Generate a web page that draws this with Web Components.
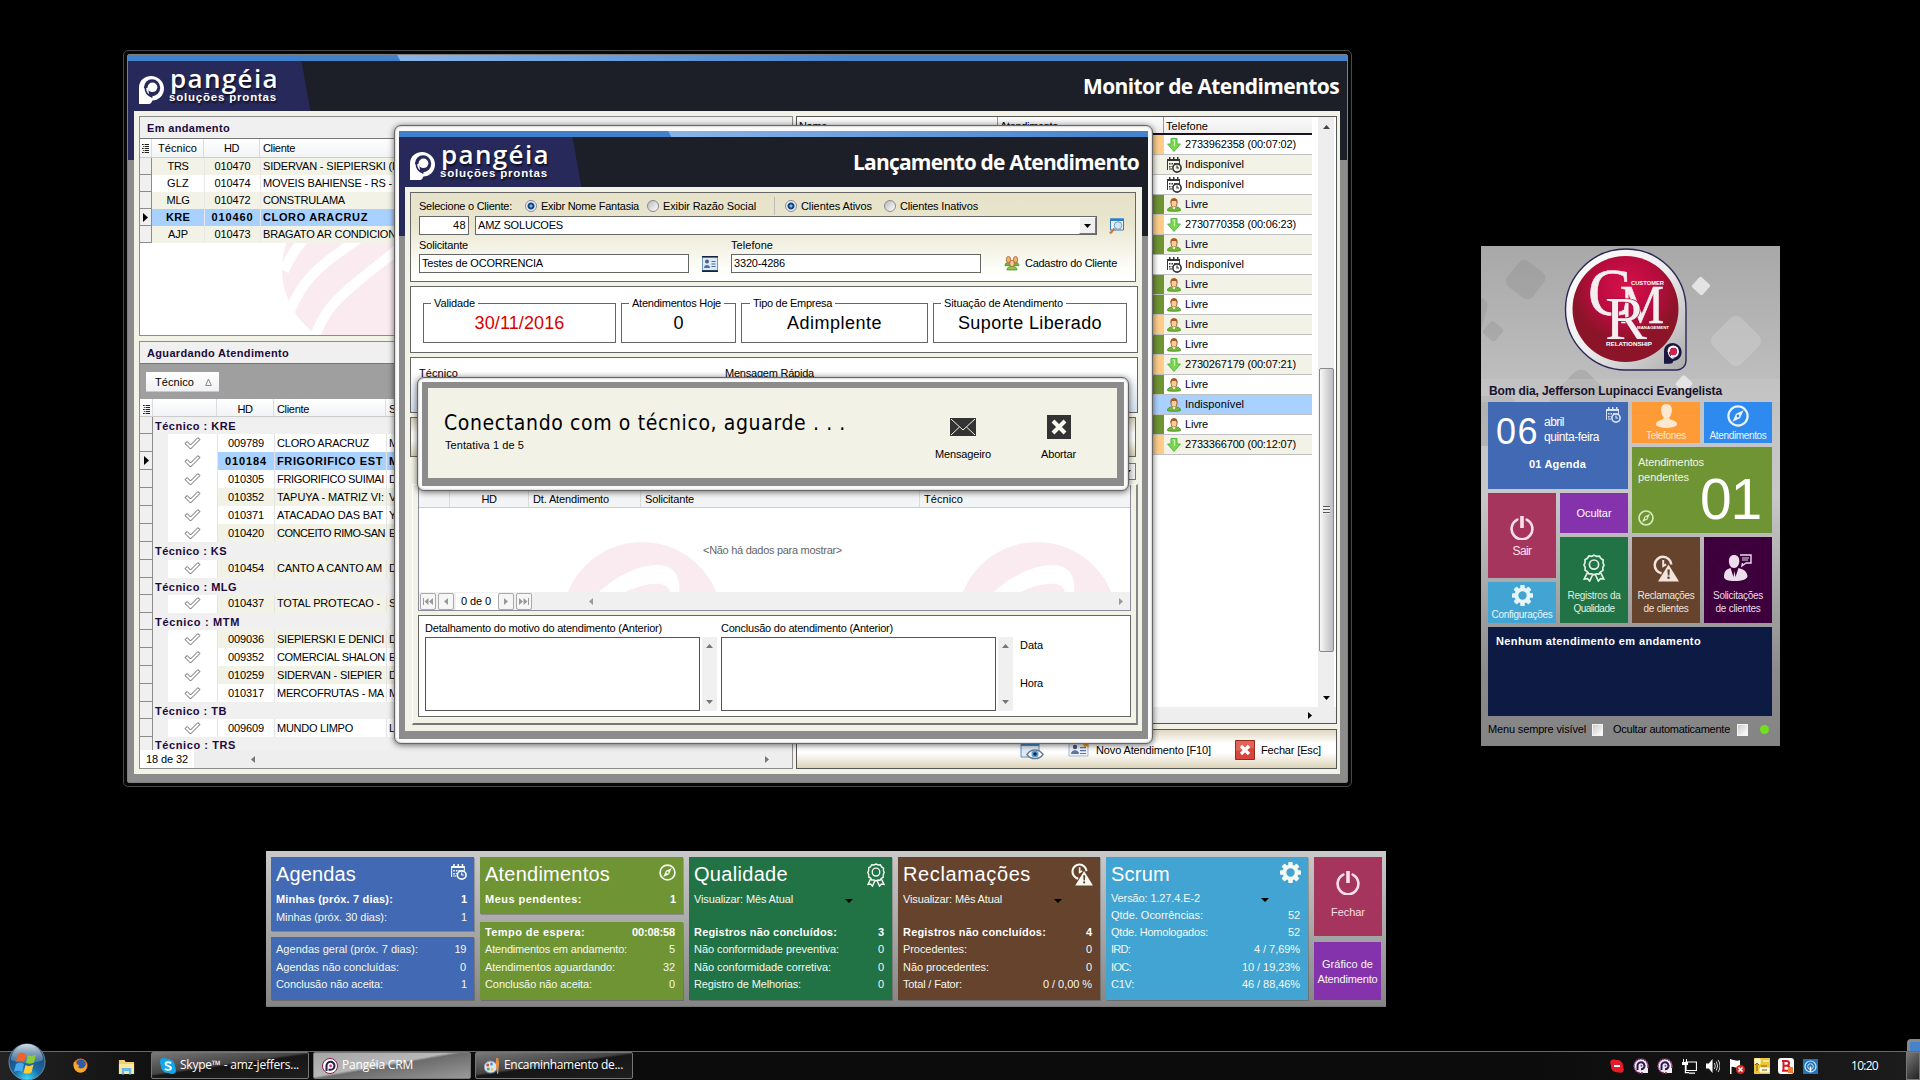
<!DOCTYPE html>
<html lang="pt-BR">
<head>
<meta charset="utf-8">
<title>Pangéia CRM</title>
<style>
html,body{margin:0;padding:0;background:#000}
body{width:1920px;height:1080px;overflow:hidden;position:relative;font:11px/13px "Liberation Sans",Arial,sans-serif;color:#000}
</style>
</head>
<body>
<crm-desktop></crm-desktop>
<script>
const base = `<style>*{box-sizing:border-box}:host{display:block;box-sizing:border-box}
.r{display:flex;align-items:center}.c{display:flex;flex-direction:column}.g{flex:1}
fit-text{flex:none}svg{display:block;flex:none}pg-icon{flex:none}</style>`;
const T = (s, w, st = '') => `<fit-text w="${w}" style="${st}">${s}</fit-text>`;
const I = (n, w, h = w, st = '') => `<pg-icon name="${n}" w="${w}" h="${h}" style="${st}"></pg-icon>`;
const def = (name, html, setup) => customElements.define(name, class extends HTMLElement {
  constructor() {
    super();
    this.attachShadow({ mode: 'open' });
  }
  connectedCallback() {
    this.shadowRoot.innerHTML = base + (typeof html === 'function' ? html(this) : html);
    if (setup) setup(this);
  }
});

/* ---------- icons: [viewBox, markup] ---------- */
const gearTeeth = [0,45,90,135,180,225,270,315].map(a => `<rect x="-2.6" y="-12" width="5.2" height="6" rx="1" transform="rotate(${a})"/>`).join('');
const emblem = (a, b) => `<path fill="${a}" d="M0 28.500V12C0 4 6 0 12 0s12.500 5 12.500 12.500S19 25 13 25c-.6 1.500-1 3.500-3 3.500z"/><ellipse cx="12.800" cy="12" rx="8" ry="8.600" fill="${b}"/><circle cx="13.200" cy="11.500" r="4.800" fill="${a}"/><path fill="${a}" d="M2 13l7-1 1 8 4 4-6 4.500H0V13z"/><path fill="none" stroke="${b}" stroke-width="1.600" d="M6.200 12c0 5 2.500 8 7 9.600"/>`;
const icons = {
  logo: ['0 0 24.500 28.500', emblem('#fff', '#28285a')],
  calClock: ['0 0 16 16', '<g fill="currentColor"><path d="M1 2h13v5h-1V4H2v9H1zM3 0h1.500v3H3zM7 0h1.500v3H7zM11 0h1.500v3H11z"/><path d="M3 6h1.500v1.500H3zM5.500 6H7v1.500H5.500zM8 6h1.500v1H8zM3 9h1.500v1.500H3zM3 11.500h3v1H3zM5.500 9h1v1h-1z"/></g><circle cx="11" cy="11" r="4.100" fill="none" stroke="currentColor" stroke-width="1.600"/><path d="M11 8.600V11h2" fill="none" stroke="currentColor" stroke-width="1.100"/>'],
  compass: ['0 0 22 22', '<circle cx="11" cy="11" r="9.600" fill="none" stroke="currentColor" stroke-width="2.200"/><path fill="currentColor" fill-rule="evenodd" d="M16.500 5.200l-3.500 8-7.500 3.600 3.500-8zM11 9.600a1.400 1.400 0 100 2.800 1.400 1.400 0 000-2.800z"/>'],
  ribbon: ['0 0 22 28', '<g fill="none" stroke="currentColor" stroke-width="1.700"><path d="M11 1.200l2.600 1.100 2.800-.2 1.400 2.400 2.400 1.500-.2 2.800L21 11.200l-1.200 2.500.1 2.700-2.400 1.400-1.500 2.200-2.700-.2-2.300 1-2.400-1-2.800.1-1.400-2.300-2.300-1.300.1-2.800L1 11l1.100-2.500-.1-2.800 2.400-1.400L5.900 2l2.700.3z"/><circle cx="11" cy="10.600" r="4.600"/><path d="M4.600 18.200L1.300 25l3.200-.4L6.700 27l3-6.500M17.400 18.200l3.300 6.800-3.200-.4-2.200 2.400-3-6.500"/></g>'],
  clockWarn: ['0 0 26 27', '<path fill="none" stroke="currentColor" stroke-width="2.500" d="M18.300 9.500A8.300 8.300 0 1 0 8.600 18.300"/><path fill="none" stroke="currentColor" stroke-width="2" d="M10.200 5v6l3-1.600"/><path fill="currentColor" fill-rule="evenodd" d="M15.500 9.500L26 26.500H5zM14.400 14.500l.4 6h1.600l.4-6zM15.500 21.500a1.200 1.200 0 100 2.600 1.200 1.200 0 000-2.600z"/>'],
  gear: ['-12 -12 24 24', `<g fill="currentColor">${gearTeeth}<path fill-rule="evenodd" d="M0-9A9 9 0 1 0 0 9 9 9 0 1 0 0-9zM0-4.800A4.800 4.800 0 1 1 0 4.800 4.800 4.800 0 1 1 0-4.800z"/></g>`],
  power: ['0 0 24 24', '<path fill="none" stroke="currentColor" stroke-width="2.600" stroke-linecap="round" d="M7.300 3.600a10.400 10.400 0 1 0 9.400 0"/><path stroke="currentColor" stroke-width="3.600" d="M12 0v12"/>'],
  person: ['0 0 22 24', '<path fill="currentColor" d="M11 0c4 0 6 3 5.600 7-.3 3-1.400 5-2.600 6.200 0 2 1 2.500 4 3.300 3 .8 4 2 4 4.500C20 23 15 24 11 24S2 23 0 21c0-2.500 1-3.700 4-4.500s4-1.300 4-3.300C6.800 12 5.700 10 5.400 7 5 3 7 0 11 0z"/>'],
  personChat: ['0 0 28 27', '<path fill="currentColor" d="M10 1c4 0 5.500 3 5.300 6.500C15 11 13.500 14 10 14S5.200 11 4.900 7.500C4.700 4 6.500 1 10 1zM6.500 14l3 9 1-6 1 6 3-9c4 1.500 8 2 9 8 0 3-5 5-13 5s-11-2-10.500-5c.5-6 3-6.500 6.500-8z"/><path fill="none" stroke="currentColor" stroke-width="1.400" d="M16 1h11v8h-5l-4 3 .5-3"/><path stroke="currentColor" d="M18 4h7M18 6h6"/>'],
  check: ['0 0 17 13', '<path fill="#fff" stroke="#555" stroke-width=".9" stroke-linejoin="round" d="M1 6.500L3.200 4.500 6.500 8 13.800.7 16 2.500 6.500 12z"/>'],
  user: ['0 0 14 14', '<path d="M.5 12.500c0-3 3-3.700 6.500-3.700s6.500.7 6.500 3.700c0 1-13 1-13 0z" fill="#76b43a" stroke="#3e8a1a" stroke-width=".8"/><ellipse cx="7" cy="5" rx="3" ry="4.200" fill="#f4cf9c" stroke="#9a5a26" stroke-width=".9"/><path d="M3.600 5C3 1 5.300.3 7 .3S11 1 10.400 5L9.300 3H5z" fill="#a85a25"/><path d="M5.200 9.300L7 11.500l1.800-2.200z" fill="#fff"/>'],
  users: ['0 0 16 14', '<g stroke-width=".7"><path d="M1 9c0-2.500 2-3 4-3s3 1 3 3zM8 9c0-2 1.500-3 3.500-3S15 7 15 9z" fill="#76b43a" stroke="#3e8a1a"/><ellipse cx="4.500" cy="3.400" rx="2.200" ry="3" fill="#f0b070" stroke="#a85a25"/><ellipse cx="11.500" cy="3.400" rx="2.200" ry="3" fill="#f0b070" stroke="#a85a25"/><path d="M3 13c0-2.500 2-3.300 5-3.300s5 .8 5 3.300z" fill="#8cc84a" stroke="#3e8a1a"/><ellipse cx="8" cy="7" rx="2.300" ry="3" fill="#f4cf9c" stroke="#a85a25"/></g>'],
  down: ['0 0 14 14', '<path d="M4 .5h6V6h3.400L7 13.500.6 6H4z" fill="#7bd54e" stroke="#54b848"/><path d="M5.500 2h2v6" stroke="#c8f5a8" stroke-width="1.200" fill="none"/>'],
  card: ['0 0 16 16', '<path fill="#dce9f7" stroke="#5580b8" stroke-width=".8" d="M.5 1h15v13.500H.5z"/><path d="M0 0h16v1.600H0zM0 14.300h16V16H0z" fill="#15243c"/><circle cx="5" cy="5.500" r="2" fill="#4b5f80"/><path d="M2 12c0-4 6-4 6 0zM9.500 5h4v1h-4zM9.500 7.500h4v1h-4zM9.500 10h4v1h-4z" fill="#4b6fa0"/>'],
  search: ['0 0 16 16', '<path fill="#eaf4ff" stroke="#3b7ab8" d="M1.500 1h13v11h-13z"/><path fill="#2f7ecb" d="M1 .5h14V3H1z"/><path stroke="#c97b4a" stroke-width="2.400" d="M1 15.500l4.500-5"/><circle cx="9" cy="7.500" r="3.800" fill="#cfe6f8" stroke="#7a9db8"/>'],
  cardNew: ['0 0 24 20', '<path fill="#eef3fa" stroke="#a8b8d0" d="M1 3h19v13H1z"/><circle cx="7" cy="7" r="2.200" fill="#43597c"/><path d="M3 14c0-5 8-5 8 0zM12 7h6v1.200h-6zM12 10h6v1.200h-6zM12 13h6v1h-6z" fill="#5c76a0"/><path fill="#e89a20" d="M17.500 0l1.400 2.200L22 2l-2 2.400 1 2.800-3-1-2.500 1.800.2-3L13.500 3l3-.5z"/>'],
  eye: ['0 0 24 22', '<path fill="#dfeaf8" stroke="#5a8dc0" d="M1 2h18v15H1z"/><path fill="#4a90d0" d="M1 1h18v5H1z"/><path fill="#fff" stroke="#68788c" stroke-width="1.400" d="M7 14.500c4-6 12-6 16 0-4 5.500-12 5.500-16 0z"/><circle cx="15" cy="14" r="3.600" fill="#5aa0d8"/><circle cx="15" cy="14" r="1.800" fill="#102a48"/>'],
  close: ['0 0 20 20', '<path fill="#d8453a" stroke="#982820" d="M.5.500h19v19H.5z"/><path fill="#e87a6a" opacity=".6" d="M1 1h18v7L1 11z"/><path stroke="#fff" stroke-width="3.200" d="M6 6l8 8M14 6l-8 8"/>'],
  mail: ['0 0 26 18', '<path fill="#333" d="M0 0h26v18H0z"/><path fill="none" stroke="#f2f2e6" stroke-width="1" d="M1 1l12 11L25 1M1 17l8.500-8M25 17l-8.500-8"/>'],
  abort: ['0 0 24 24', '<path fill="#333" d="M0 0h24v24H0z"/><path stroke="#f8f8f0" stroke-width="4" d="M6 6l12 12M18 6L6 18"/>'],
  list: ['0 0 8 9', '<path d="M0 0h2v1H0zM3 0h5v1H3zM1 2h1v1H1zM3 2h5v1H3zM0 4h2v1H0zM3 4h5v1H3zM1 6h1v1H1zM3 6h5v1H3zM0 8h2v1H0zM3 8h5v1H3z" fill="#222"/>'],
  ptr: ['0 0 5 9', '<path d="M0 0l5 4.500L0 9z"/>'],
  mark: ['0 0 160 160', '<circle cx="80" cy="80" r="80" fill="#faebf0"/><g fill="none" stroke="#fff" stroke-width="10"><path d="M2 82C12 58 26 44 46 30S84-2 92-10"/><path d="M8 122C20 92 36 78 62 60S108 30 118 5"/><path d="M30 158C40 118 62 104 86 84S134 52 142 20"/></g>'],
  mark2: ['0 0 160 160', '<circle cx="80" cy="80" r="80" fill="#faebf0"/><path fill="#fff" d="M18 72C36 44 70 23 95 23c18 0 24 12 22 30l-4 19h-12c10-14 10-28-2-30-20-2-45 10-66 30z"/>'],
  tri: ['0 0 8 4', '<path d="M0 0h8L4 4z" fill="currentColor"/>'],
  up: ['0 0 8 4', '<path d="M0 4h8L4 0z" fill="currentColor"/>'],
  lf: ['0 0 4 8', '<path d="M4 0v8L0 4z" fill="currentColor"/>'],
  rt: ['0 0 4 8', '<path d="M0 0v8L4 4z" fill="currentColor"/>'],
  first: ['0 0 10 8', '<path d="M0 0h1v8H0zM5.500 0v8L1.500 4zM10 0v8L6 4z" fill="currentColor"/>'],
  last: ['0 0 10 8', '<path d="M9 0h1v8H9zM4.500 0v8L8.500 4zM0 0v8L4 4z" fill="currentColor"/>'],
  orb: ['0 0 38 38', '<defs><radialGradient id="o" cx=".5" cy="1" r=".95"><stop offset="0" stop-color="#3fe0ff"/><stop offset=".4" stop-color="#1a6ca8"/><stop offset="1" stop-color="#1c3f6a"/></radialGradient><linearGradient id="h" x2="0" y2="1"><stop offset="0" stop-color="#dce8f0" stop-opacity=".95"/><stop offset="1" stop-color="#8ab" stop-opacity=".35"/></linearGradient></defs><circle cx="19" cy="19" r="18" fill="url(#o)" stroke="#6a8ca4"/><path d="M3 17a16 16 0 0 1 32 0c-8 4-24 4-32 0z" fill="url(#h)"/><path d="M10 11c3-2 6-1 8 0l-2 8c-2-1-5-2-8 0z" fill="#f0642c"/><path d="M20 12c3 1.500 5 1 8-.5l-2 8c-3 1.500-5 1.500-8 .5z" fill="#8ccc3c"/><path d="M8 21c3-2 6-1 8 0l-2 8c-2-1-5-2-8 0z" fill="#4aaaf0"/><path d="M17.500 22c3 1.500 5 1 8-.5l-2 8c-3 1.500-5 1.500-8 .5z" fill="#fccc3a"/>'],
  firefox: ['0 0 16 16', '<circle cx="8" cy="8" r="7.500" fill="#e8701a"/><circle cx="8.500" cy="6.500" r="5" fill="#2c5ca8"/><path fill="#f8a82a" d="M1 4c2 0 3 1 3 3 2 0 3 1 2 2s1 3 4 2 4-3 4-6c2 5-1 10.500-6 10.500S-.5 10 1 4z"/>'],
  explorer: ['0 0 18 16', '<path fill="#f0d070" d="M1 1h6l1 2h9v12H1z"/><path fill="#fae8a0" d="M1 5h16v10H1z"/><path fill="#68b8e8" d="M4 9h10v6.500h-2.500V12h-5v3.500H4z"/>'],
  skype: ['0 0 16 16', '<path fill="#12a5ec" d="M4 0c2 0 3 1 4 1 4 0 7 3 7 7 0 1 1 2 1 4a4 4 0 0 1-4 4c-2 0-3-1-4-1-4 0-7-3-7-7 0-1-1-2-1-4a4 4 0 0 1 4-4z"/><path fill="none" stroke="#fff" stroke-width="1.900" d="M11 5.300C9.500 3.500 5.500 4 5.500 6S11 7.800 11 10s-4.500 2.500-6 .6"/>'],
  pang: ['0 0 16 16', '<circle cx="8" cy="8" r="7.500" fill="#fff" stroke="#8a1a50"/><path d="M4.500 13V8a4 4 0 1 1 4 3.800H6.500" fill="none" stroke="#241a48" stroke-width="2"/><circle cx="8.600" cy="7.800" r="1.400" fill="#d03060"/>'],
  tpang: ['0 0 16 16', '<circle cx="8" cy="8" r="7" fill="#f2e8f0" stroke="#8a4078" stroke-width="1.500" stroke-dasharray="2 1"/><path d="M10 10h5v5h-5z" fill="#eee"/><path d="M4.500 12V8a3.500 3.500 0 1 1 3.500 3.300" fill="none" stroke="#241a58" stroke-width="2"/><circle cx="8.400" cy="7.800" r="1" fill="#c03060"/>'],
  paint: ['0 0 17 16', '<ellipse cx="7" cy="9" rx="7" ry="6" fill="#d8e4f0" stroke="#7894b0"/><circle cx="4" cy="7" r="1.600" fill="#e04a30"/><circle cx="8" cy="6" r="1.500" fill="#3a9ad8"/><circle cx="4.500" cy="11" r="1.500" fill="#50b040"/><circle cx="8.500" cy="11.500" r="1.300" fill="#f0c030"/><path d="M13 0h2l1 5-1 11h-1L12.500 5z" fill="#e89040"/>'],
  skred: ['0 0 14 14', '<path fill="#e81c28" d="M3.500.5c2 0 2 .6 3.500.6 3.500 0 6 2.500 6 6 0 1.500.8 2 .8 3.400a3.300 3.300 0 0 1-3.300 3.300c-1.500 0-2-.6-3.500-.6-3.500 0-6-2.500-6-6C1 5.500.2 5 .2 3.800A3.300 3.300 0 0 1 3.500.5z"/><path d="M4 6h6v2H4z" fill="#fff"/>'],
  net: ['0 0 15 15', '<path d="M4 3h10.500v8.500H4z" fill="#111" stroke="#fff" stroke-width="1.200"/><path d="M7 13.500h6v1.200H7zM1 0h1v3H1zM4 0h1v3H4zM0 3h6v3H4v7h3v1.200H2.800V6H0z" fill="#fff"/>'],
  vol: ['0 0 15 14', '<path d="M0 4.500h3L7 0v14L3 9.500H0z" fill="#fff"/><path d="M9 4q2 3 0 6M11 2.500q3 4.500 0 9M13 1q4 6 0 12" fill="none" stroke="#ddd"/>'],
  flag: ['0 0 15 15', '<path d="M0 0h1.500v15H0zM1.500 1C4 0 6 3 10 1v7C6 10 4 7 1.500 8z" fill="#fff"/><circle cx="10.500" cy="10.500" r="4.500" fill="#d82820"/><path d="M8.500 8.500l4 4M12.500 8.500l-4 4" stroke="#fff" stroke-width="1.500"/>'],
  yel: ['0 0 16 16', '<path d="M0 0h16v16H0z" fill="#e8c838"/><path d="M1 1h5v5H1zM9 3h6M6 10h9v4H6z" fill="#fff6c0" stroke="#fff"/><path d="M3 13V5l-2 2M3 5l2 2M7 8h6M8 12h5" stroke="#8a5a10" fill="none"/>'],
  bb: ['0 0 16 16', '<rect width="16" height="16" rx="3" fill="#fff"/><path fill="none" stroke="#d01c28" stroke-width="2" d="M4 3h4.500q2.500 0 2.500 2.300T8.500 7.700H5.500h3.500q2.700 0 2.700 2.500t-2.700 2.500H4M5.500 3v10"/><path d="M10 9h5v6h-5z" fill="#f08030"/>'],
  radar: ['0 0 15 15', '<path d="M0 0h15v15H0z" fill="#2474b8"/><circle cx="7.500" cy="7.500" r="5.500" fill="none" stroke="#cfe6f8" stroke-width="1.200"/><circle cx="7.500" cy="7.500" r="2.800" fill="none" stroke="#cfe6f8"/><path d="M7.500 7.500V13" stroke="#fff" stroke-width="1.500"/>']
};
def('pg-icon', el => `<style>:host{display:inline-block}</style><svg width="${el.getAttribute('w')}" height="${el.getAttribute('h')}" viewBox="${icons[el.getAttribute('name')][0]}" preserveAspectRatio="none">${icons[el.getAttribute('name')][1]}</svg>`);

/* ---------- window chrome ---------- */
def('pg-logo', `<style>:host{display:block;color:#fff;text-shadow:1px 2px 2px #000a}
.n{font:600 26px/25px "Open Sans",sans-serif}.s{font:bold 11.500px/13px "Liberation Sans",sans-serif;margin-top:0px;margin-left:-1px}</style>
<div class="r" style="align-items:flex-start;margin-top:-3px">${I('logo', 25, 28, 'margin-top:10px;margin-right:6px')}
<div class="c"><div class="n">${T('pangéia', 109)}</div><div class="s">${T('soluções prontas', 108)}</div></div></div>`);

def('pg-window', el => `<style>
.in{height:100%;display:flex;flex-direction:column;background:linear-gradient(#0000 105px,#8c8c8c 105px),linear-gradient(90deg,#27295a 50%,#1c1f27 50%)}
.st{height:6px;flex:none;background:linear-gradient(62deg,#4181cc 0 ${el.dataset.s}px,#8ab4e6 ${+el.dataset.s + 1}px,#4583cd ${+el.dataset.s + 400}px)}
.hd{height:50px;flex:none;background:linear-gradient(80deg,#27295a 0 179px,#1c1f27 180px);padding:0 8px 0 11px}
.bd{flex:1;margin:0 var(--er,6px) 8px 6px;background:#f2f2e6;min-height:0}
.t{font:bold 21px/30px "Open Sans",sans-serif;color:#fff;margin-top:0;margin-right:var(--tr,0)}
</style><div class="in"><div class="st"></div><div class="hd r"><pg-logo></pg-logo><div class="g"></div><div class="t">${T(el.dataset.title, el.dataset.w)}</div></div><div class="bd"><slot></slot></div></div>`);

/* ---------- monitor content ---------- */
def('grid-panel', el => `<style>
:host{display:flex;flex-direction:column;border:1px solid #8c8c8c;background:#fff;overflow:hidden}
.cap{height:21px;flex:none;background:#f0f0f0;font-weight:bold;color:#1c0a3c;padding:5px 7px 0}</style>
<div class="cap">${T(el.dataset.cap, el.dataset.w)}</div><slot></slot>`);

const running = [['TRS','010470','SIDERVAN - SIEPIERSKI (I',132,21],['GLZ','010474','MOVEIS BAHIENSE - RS -',129,22],['MLG','010472','CONSTRULAMA',82,23],['KRE','010460','CLORO ARACRUZ',105,24],['AJP','010473','BRAGATO AR CONDICION',133,20]];
def('running-grid', `<style>
:host{flex:1;border-top:1px solid #777;display:flex;flex-direction:column;min-height:0}
.row,.h{display:grid;grid-template-columns:12px 52px 56px 1fr;height:17px;flex:none}
.row>*{display:flex;align-items:center;overflow:hidden;white-space:nowrap}
.h{height:19px;background:linear-gradient(#fff,#f2f3f5);border-bottom:1px solid #ccc}.h>*{display:flex;align-items:center;padding-top:1px;border-right:1px solid #dcdcdc}
.m{justify-content:center}.i{background:#f0f0f0;border-right:1px solid #8c8c8c;border-bottom:1px solid #8c8c8c;justify-content:center}
.a{background:#f2f2e6}.s{background:#a9d1ff;font-weight:bold}.row>*+*+*{border-left:1px solid #e8e8e8}
.w{flex:1;overflow:hidden;padding-left:142px}
</style>
<div class="h"><span class="m">${I('list', 7, 9)}</span><span class="m">${T('Técnico', 39)}</span><span class="m">${T('HD', 15)}</span><span style="padding-left:3px">${T('Cliente', 32)}</span></div>
${running.map((r, i) => `<div class="row ${i == 3 ? 's' : i % 2 ? '' : 'a'}"><span class="i">${i == 3 ? I('ptr', 5, 9) : ''}</span><span class="m">${T(r[0], r[4])}</span><span class="m">${T(r[1], i == 3 ? 42 : 36)}</span><span style="padding-left:2px">${T(r[2], r[3])}</span></div>`).join('')}
<div class="w">${I('mark', 160, 160, 'margin-top:-54px')}</div>`);

const waiting = [['g','KRE',81],['009789','CLORO ARACRUZ',92,'M',0],['010184','FRIGORIFICO EST',106,'M',2],['010305','FRIGORIFICO SUIMAI',107,'D',0],['010352','TAPUYA - MATRIZ VI:',107,'V',1],['010371','ATACADAO DAS BAT',106,'Y',0],['010420','CONCEITO RIMO-SAN',108,'E',1],['g','KS',72],['010454','CANTO A CANTO AM',105,'D',1],['g','MLG',82],['010437','TOTAL PROTECAO -',103,'S',1],['g','MTM',85],['009036','SIEPIERSKI E DENICI',107,'D',1],['009352','COMERCIAL SHALON',108,'E',0],['010259','SIDERVAN - SIEPIER',105,'D',1],['010317','MERCOFRUTAS - MA',107,'M',0],['g','TB',72],['009609','MUNDO LIMPO',76,'L',0],['g','TRS',81]];
def('waiting-grid', `<style>
:host{flex:1;display:flex;flex-direction:column;min-height:0}
.grp{height:36px;flex:none;background:#9f9f9f;border-top:1px solid #777;padding:8px 6px}
.b{width:73px;height:20px;background:linear-gradient(#fff,#f0f1f4);border-bottom:1px solid #c8c8c8;padding:1px 7px 0 9px;justify-content:space-between}
.h,.row{display:grid;grid-template-columns:13px 15px 49px 57px 112px 1fr;height:18px;flex:none}
.h{grid-template-columns:13px 64px 57px 112px 1fr;background:linear-gradient(#fff,#f2f3f5);border-bottom:1px solid #ccc}
.h>*{display:flex;align-items:center;padding-top:3px;border-right:1px solid #dcdcdc}.row>*{display:flex;align-items:center;overflow:hidden;white-space:nowrap;padding-left:2px}
.grow{display:grid;grid-template-columns:13px 1fr;height:17.300px;flex:none;background:#f0f0f0;font-weight:bold;color:#1c0a3c}
.row .m{justify-content:center;padding:0}.h .m{justify-content:center}.i{background:#f0f0f0;border-right:1px solid #8c8c8c;border-bottom:1px solid #8c8c8c;display:flex;align-items:center}.row .i{padding-left:4px}
.d{background:#f0f0f0}.a{background:#f2f2e6}.s{background:#a9d1ff;font-weight:bold}.e{border-left:1px solid #e4e4e4}
.rows{flex:1;overflow:hidden;display:flex;flex-direction:column}
.f{height:18px;flex:none;background:#eee}.f .l{width:54px;background:#fff;height:100%;padding-left:6px}
</style>
<div class="grp"><div class="b r">${T('Técnico', 39)}<svg width="7" height="8"><path d="M3.500 1L6.300 7.500H.7z" fill="none" stroke="#888"/></svg></div></div>
<div class="h"><span class="m">${I('list', 7, 9)}</span><span></span><span class="m">${T('HD', 15)}</span><span style="padding-left:3px">${T('Cliente', 32)}</span><span style="padding-left:3px">S</span></div>
<div class="rows">${waiting.map(r => r[0] == 'g' ? `<div class="grow"><span class="i"></span><span style="padding:${r[1] == 'TRS' ? 2 : 3}px 0 0 2px">${T('Técnico : ' + r[1], r[2])}</span></div>` :
`<div class="row"><span class="i">${r[4] == 2 ? I('ptr', 5, 9) : ''}</span><span class="d"></span><span class="m">${I('check', 17, 13)}</span>${['e m', 'e', 'e'].map((c, k) => `<span class="${c} ${['', 'a', 's'][r[4]]}">${k == 0 ? T(r[0], r[4] == 2 ? 42 : 36) : k == 1 ? T(r[1], r[2]) : r[3]}</span>`).join('')}</div>`).join('')}</div>
<div class="f r"><div class="l r">${T('18 de 32', 42)}</div>${I('lf', 4, 7, 'margin-left:57px;color:#777')}${I('rt', 4, 7, 'margin-left:510px;color:#777')}</div>`);

const phones = [['o','2733962358 (00:07:02)'],['','i'],['','i'],['g','l'],['o','2730770358 (00:06:23)'],['g','l'],['','i'],['g','l'],['g','l'],['o','l'],['g','l'],['o','2730267179 (00:07:21)'],['g','l'],['s','u'],['g','l'],['o','2733366700 (00:12:07)']];
def('phone-grid', `<style>
:host{display:flex;flex-direction:column;flex:1;border:1px solid #555;background:#fff;min-height:0}
.top{display:flex;flex:1;min-height:0}.list{width:515px}
.h{display:grid;grid-template-columns:201px 166px 1fr;height:18px;border-bottom:2px solid #1a1020;background:linear-gradient(#fbfbfb,#eee)}
.h span{padding:3px 0 0 2px;border-right:1px solid #999}.h span:last-child{border:0}
.row{display:grid;grid-template-columns:367px 1fr;height:20px;border-bottom:1px solid #c0c0c0}
.row:nth-child(odd){background:#f2f2e6}.row.s{background:#a9d1ff}.o{background:#ffcc8a}.g2{background:#6f9433}
.row>div{padding-left:3px}.sb{margin-left:6px;width:16px;background:#eee;align-items:center;padding-top:8px}
.th{width:15px;height:284px;flex:none;margin-top:239px;border:1px solid #888;border-radius:2px;background:linear-gradient(90deg,#f8f8f8,#d4d4d8 60%,#bcbcc0);align-items:center;justify-content:center}
.th i{width:7px;height:8px;background:repeating-linear-gradient(#555 0 1px,#eee 1px 3px)}
.hs{height:16px;background:#eee;flex:none}</style>
<div class="top"><div class="list"><div class="h"><span>${T('Nome', 28)}</span><span>${T('Atendimento', 58)}</span><span>${T('Telefone', 42)}</span></div>
${phones.map(([c, k]) => `<div class="row ${c == 's' ? 's' : ''}"><span class="${c == 'o' ? 'o' : c == 'g' ? 'g2' : ''}"></span><div class="r">${k.length > 1 ? I('down', 14, 14) + T(k, 111, 'margin-left:4px') : k == 'i' ? I('calClock', 16, 16, 'margin-left:-1px;color:#333') + T('Indisponível', 59, 'margin-left:3px') : I('user', 14, 14) + (k == 'u' ? T('Indisponível', 59, 'margin-left:4px') : T('Livre', 23, 'margin-left:4px'))}</div></div>`).join('')}</div>
<div class="sb c">${I('up', 7, 4, 'color:#444')}<div class="th c"><i></i></div><div class="g"></div>${I('tri', 7, 4, 'margin-bottom:7px')}</div></div>
<div class="hs r">${I('rt', 4, 7, 'margin-left:511px')}</div>`);

def('monitor-view', `<style>
:host{height:100%;padding:5px 3px 5px 5px;display:flex;gap:3px}
.L{width:654px}.R{width:541px}
.tb{height:40px;border:1px solid #555;margin-top:5px;background:linear-gradient(#ded6bf,#fff 35%,#fff 60%,#ddd3b8);padding:2px 0 0 223px;flex:none}</style>
<div class="L c"><grid-panel data-cap="Em andamento" data-w="83" style="height:220px"><running-grid></running-grid></grid-panel>
<grid-panel data-cap="Aguardando Atendimento" data-w="142" style="flex:1;margin-top:5px"><waiting-grid></waiting-grid></grid-panel></div>
<div class="R c"><phone-grid></phone-grid><div class="tb r">${I('eye', 24, 22, 'margin-top:2px')}${I('cardNew', 24, 20, 'margin-left:24px')}${T('Novo Atendimento [F10]', 115, 'margin-left:4px')}${I('close', 20, 20, 'margin-left:24px')}${T('Fechar [Esc]', 60, 'margin-left:6px')}</div></div>`);

/* ---------- dialog content ---------- */
def('radio-dot', el => `<style>:host{width:12px;height:12px;border-radius:50%;border:1px solid #889;background:${el.hasAttribute('on') ? 'radial-gradient(circle,#6fc0f0 0 1px,#103a68 2px,#1a4a80 3px,#eef 4px)' : 'linear-gradient(135deg,#bbb,#fff)'};flex:none}</style>`);
def('legend-box', el => `<style>fieldset{margin:0;height:46px;min-width:0;border:1px solid #666;padding:0;text-align:center}
legend{padding:0 3px;margin-left:${el.dataset.l}px;text-align:left;font-size:11px}
.v{font-size:18px;line-height:22px;margin-top:2px;color:${el.dataset.c || '#000'}}</style>
<fieldset><legend>${T(el.dataset.cap, el.dataset.lw)}</legend><div class="v">${T(el.dataset.v, el.dataset.w)}</div></fieldset>`);
def('memo-box', el => `<style>.t{width:275px;height:74px;border:1px solid #555;background:#fff}.s{width:15px;height:74px;margin-left:2px;background:#f0f0f0;justify-content:space-between;padding:7px 0;align-items:center;color:#777}</style>
<div>${T(el.dataset.cap, el.dataset.w)}</div><div style="display:flex;margin-top:2px"><div class="t"></div><div class="s c">${I('up', 7, 4)}${I('tri', 7, 4)}</div></div>`);

def('launch-view', `<style>
:host{height:100%;padding:5px 4px 6px 5px;display:flex;flex-direction:column}
.p{border:1px solid #666;flex:none}
.in{height:19px;border:1px solid #666;background:#fff;padding:0 2px}
.cb{width:17px;height:17px;background:#f0f0f0;border:1px solid;border-color:#fff #777 #777 #fff;justify-content:center;margin-right:-2px}
.tab{flex:1;margin:3px 0 0 2px;border:1px solid #fff;border-right:2px solid #888;border-bottom:2px solid #777;padding:0 5px 7px;min-height:0}
.gr{height:126px;border:1px solid #8c8c9c;border-top:0;background:#fff;flex:none}
.gh{height:23px;background:#f3f4f6;border-bottom:1px solid #ccc;display:grid;grid-template-columns:31px 79px 112px 279px 1fr;flex:none}
.gh span{border-right:1px solid #dcdcdc;display:flex;align-items:center;padding:6px 0 0 4px}
.gb{height:84px;flex:none;overflow:hidden;display:grid;grid-template-columns:143px 395px 1fr}
.nav{flex:1;background:#f0f0f0;color:#999;padding-left:1px}
.nav i{width:16px;height:17px;border:1px solid #aaa;border-radius:2px;display:flex;align-items:center;justify-content:center;margin-right:2px;background:#f6f6f6}
</style>
<div class="p" style="width:726px;height:90px;padding:4px 8px 0;background:linear-gradient(#e6e2c8,#e9e6cf 35%,#fdfdf9 85%,#fff)">
 <div class="r" style="height:18px">${T('Selecione o Cliente:', 93)}<radio-dot on style="margin:0 4px 0 13px"></radio-dot>${T('Exibr Nome Fantasia', 98)}<radio-dot style="margin:0 4px 0 8px"></radio-dot>${T('Exibir Razão Social', 93)}<div style="width:1px;height:18px;background:#bbb;margin:0 10px 0 18px"></div><radio-dot on style="margin-right:4px"></radio-dot>${T('Clientes Ativos', 71)}<radio-dot style="margin:0 4px 0 12px"></radio-dot>${T('Clientes Inativos', 78)}</div>
 <div class="r" style="margin-top:1px"><div class="in r" style="width:50px;justify-content:flex-end">${T('48', 13)}</div><div class="in r" style="width:622px;margin-left:6px">${T('AMZ SOLUCOES', 85)}<div class="g"></div><div class="cb r">${I('tri', 7, 4)}</div></div>${I('search', 16, 16, 'margin-left:12px')}</div>
 <div class="r" style="height:19px;padding-top:2px"><div style="width:312px">${T('Solicitante', 49)}</div>${T('Telefone', 42)}</div>
 <div class="r"><div class="in r" style="width:270px">${T('Testes de OCORRENCIA', 121)}</div>${I('card', 16, 16, 'margin-left:13px')}<div class="in r" style="width:250px;margin-left:13px">${T('3320-4286', 51)}</div>${I('users', 16, 15, 'margin-left:23px')}${T('Cadastro do Cliente', 92, 'margin-left:5px')}</div>
</div>
<div class="p" style="margin-top:4px;height:67px;background:#fff;display:grid;grid-template-columns:193px 114px 186px 193px;column-gap:6px;padding:10px 0 0 12px">
 <legend-box style="margin-right:0" data-cap="Validade" data-lw="41" data-l="7" data-v="30/11/2016" data-w="90" data-c="#d80000"></legend-box>
 <legend-box style="margin-left:-1px" data-cap="Atendimentos Hoje" data-lw="89" data-l="7" data-v="0" data-w="10"></legend-box>
 <legend-box style="margin-left:-1px" data-cap="Tipo de Empresa" data-lw="79" data-l="8" data-v="Adimplente" data-w="95"></legend-box>
 <legend-box style="margin-left:-1px" data-cap="Situação de Atendimento" data-lw="119" data-l="7" data-v="Suporte Liberado" data-w="144"></legend-box>
</div>
<div class="p" style="margin-top:4px;height:56px;background:linear-gradient(#fff,#fff 25%,#d3dff0);padding:9px 8px;display:flex"><div style="width:306px">${T('Técnico', 39)}</div>${T('Mensagem Rápida', 89)}</div>
<div class="p" style="width:726px;margin-top:4px;height:40px;background:linear-gradient(#d8d0b8,#fff 40%,#fff 60%,#d8ceb0)"></div>
<div class="r" style="height:19px;margin-top:5px;justify-content:flex-end;padding-right:2px;flex:none"><div class="cb r" style="border-color:#777;margin:0">${I('tri', 7, 4)}</div></div>
<div class="tab c">
 <div class="gr c"><div class="gh"><span></span><span style="justify-content:center;padding-left:0">${T('HD', 15)}</span><span>${T('Dt. Atendimento', 76)}</span><span>${T('Solicitante', 49)}</span><span style="border:0">${T('Técnico', 39)}</span></div>
 <div class="gb"><span></span><span style="display:grid"><span style="grid-area:1/1">${I('mark2', 160, 160, 'margin-top:34px')}</span><span style="grid-area:1/1;margin:36px 0 0 141px;color:#666">${T('&lt;Não há dados para mostrar&gt;', 139)}</span></span><span style="overflow:hidden">${I('mark2', 160, 160, 'margin-top:34px')}</span></div>
 <div class="nav r"><i>${I('first', 10, 7)}</i><i>${I('lf', 4, 7)}</i><span style="background:#fff;color:#000;width:42px;padding:2px 0 2px 5px;height:17px">${T('0 de 0', 30)}</span><i>${I('rt', 4, 7)}</i><i>${I('last', 10, 7)}</i>${I('lf', 4, 7, 'margin-left:55px')}<div class="g"></div>${I('rt', 4, 7, 'margin-right:7px')}</div></div>
 <div style="margin-top:4px;height:102px;border:1px solid #666;background:#fff;display:flex;padding:6px 6px 0;flex:none"><memo-box data-cap="Detalhamento do motivo do atendimento (Anterior)" data-w="237"></memo-box><memo-box style="margin-left:4px" data-cap="Conclusão do atendimento (Anterior)" data-w="172"></memo-box>
 <div class="c" style="margin:17px 0 0 7px;gap:25px">${T('Data', 23)}${T('Hora', 23)}</div></div>
</div>`);

def('wait-popup', `<style>:host{border:6px solid #8c8c8c;border-bottom-width:8px;border-right-width:7px;background:#f2f2e6;height:100%}
.in{padding-left:16px}.t{font:21px/24px "DejaVu Sans Condensed","DejaVu Sans",sans-serif}</style>
<div class="in" style="display:flex"><div style="padding-top:23px;width:491px"><div class="t">${T('Conectando com o técnico, aguarde . . .', 402)}</div><div style="margin:4px 0 0 1px">${T('Tentativa 1 de 5', 79)}</div></div>
<div class="c" style="align-items:center;margin-top:30px">${I('mail', 26, 18)}<div style="margin-top:12px">${T('Mensageiro', 56)}</div></div>
<div class="c" style="align-items:center;margin:27px 0 0 50px">${I('abort', 24, 24)}<div style="margin-top:9px">${T('Abortar', 35)}</div></div></div>`);

/* ---------- CRM side widget ---------- */
def('crm-widget', `<style>
:host{background:linear-gradient(#a8a8a8,#c4c4c4 35%,#c8c8c8 50%,#8b8b8b 85%,#848484);color:#fff;font:12px/15px "Liberation Sans",Arial,sans-serif;overflow:hidden}
.top{height:133px;padding-left:82px}
.hi{height:23px;padding:5px 8px;background:#cbcbcb60;color:#17122c;font-weight:bold}
.g{display:grid;margin:0 8px 0 7px;grid-template-columns:repeat(4,68px);grid-template-rows:41px 42px 40px 41px 41px 89px;gap:4px}
.g>div{min-width:0}.m{display:flex;flex-direction:column;align-items:center}.s{font-size:10px;line-height:13px}
.cb{width:11px;height:12px;background:linear-gradient(135deg,#ccc,#fff);border:1px solid #f4f4f4;outline:0}
.ft{font-size:11px;color:#000;height:27px;padding-left:7px}
</style>
<div style="display:grid"><div style="grid-area:1/1"><svg width="299" height="500" fill="#8a8a8a" opacity=".3"><rect x="-22" y="50" width="44" height="40" rx="8" transform="rotate(15)"/><rect x="28" y="18" width="32" height="32" rx="7" transform="rotate(38 45 35)"/><rect x="3" y="76" width="16" height="16" rx="3" transform="rotate(40 10 86)"/><rect x="75" y="130" width="50" height="50" rx="10" transform="rotate(45 100 155)"/><rect x="-15" y="150" width="50" height="50" rx="10"/><rect x="235" y="75" width="40" height="40" rx="8" fill="#ddd" transform="rotate(45 255 95)"/></svg></div>
<div style="grid-area:1/1;z-index:1"><div class="top"><svg width="200" height="150" style="margin-bottom:-17px" viewBox="0 0 200 150"><defs><radialGradient id="r" cy=".3"><stop offset="0" stop-color="#d8104c"/><stop offset=".6" stop-color="#b80c3e"/><stop offset="1" stop-color="#8c1428"/></radialGradient><linearGradient id="w" x2="1" y2="1"><stop offset="0" stop-color="#fff"/><stop offset=".5" stop-color="#eee"/><stop offset="1" stop-color="#aaa"/></linearGradient></defs>
<path d="M63 3a60 60 0 0 1 60 60v52a9 9 0 0 1-9 9H63A60.500 60.500 0 0 1 63 3z" fill="url(#w)" stroke="#2b2858" stroke-width="1.400"/><circle cx="62.500" cy="63" r="53" fill="url(#r)"/>
<g font-family="Liberation Serif" fill="#f4eef0" stroke="#f4eef0" stroke-width=".6"><text x="25" y="69" font-size="68" textLength="43" lengthAdjust="spacingAndGlyphs">C</text><text x="57" y="77" font-size="55" textLength="44" lengthAdjust="spacingAndGlyphs">M</text><text x="42" y="93" font-size="62" textLength="42" lengthAdjust="spacingAndGlyphs" stroke="#a8103c" stroke-width="1.500" paint-order="stroke">R</text></g>
<g font-family="Liberation Sans" font-weight="bold" fill="#fff"><text x="68" y="38.500" font-size="5" textLength="33" lengthAdjust="spacingAndGlyphs">CUSTOMER</text><text x="74" y="83" font-size="4" textLength="32" lengthAdjust="spacingAndGlyphs">MANAGEMENT</text><text x="43" y="99.500" font-size="5" textLength="46" lengthAdjust="spacingAndGlyphs">RELATIONSHIP</text></g>
<g transform="translate(101,97) scale(.72)">${emblem('#1b1740', '#fff')}<circle cx="13" cy="12" r="5" fill="#d82050"/></g>
<rect x="131" y="33" width="14" height="14" rx="2" fill="#ececec" opacity=".85" transform="rotate(42 138 40)"/><rect x="115" y="131" width="13" height="13" rx="2" fill="#ececec" opacity=".8" transform="rotate(42 121 137)"/></svg></div>
<div class="hi">${T('Bom dia, Jefferson Lupinacci Evangelista', 233)}</div>
<div class="g">
<div style="grid-area:1/1/3/3;background:#4169b4"><div class="r" style="padding-left:8px;height:56px;align-items:flex-start"><div style="font-size:36px;line-height:38px;margin-top:11px">${T('06', 43)}</div><div style="margin:13px 0 0 5px;width:60px">${T('abril', 20)}<br>${T('quinta-feira', 55)}</div>${I('calClock', 16, 16, 'margin:5px 0 0 1px;color:#d8e4f4')}</div><div style="font-weight:bold;margin:-1px 0 0 41px;font-size:11px">${T('01 Agenda', 57)}</div></div>
<div class="m s" style="background:#ff9b36;padding-top:2px;color:#ffe8d0">${I('person', 21, 24)}${T('Telefones', 40, 'margin-top:1px')}</div>
<div class="m s" style="background:#2e8aee;padding-top:3px;color:#eaf4ff">${I('compass', 22, 22)}${T('Atendimentos', 57, 'margin-top:2px')}</div>
<div style="grid-area:2/3/4/5;background:#6f9433;display:flex;color:#f0f6e0"><div style="padding:8px 0 0 6px;width:64px;font-size:11px">${T('Atendimentos', 66)}<br>${T('pendentes', 51)}${I('compass', 16, 16, 'display:block;margin-top:25px;color:#dce8c0')}</div><div style="font-size:57px;line-height:50px;margin-top:27px;color:#fff;margin-left:4px">${T('01', 61)}</div></div>
<div class="m" style="grid-area:3/1/5/2;background:#a5355c;padding-top:23px;color:#fbe0ea">${I('power', 24, 24)}${T('Sair', 19, 'margin-top:4px')}</div>
<div class="m" style="background:#8433ad;padding-top:13px;grid-area:3/2;font-size:11px">${T('Ocultar', 35)}</div>
<div class="m s" style="grid-area:4/2/6/3;background:#217346;padding-top:17px;color:#dff0e4">${I('ribbon', 22, 28)}${T('Registros da', 53, 'margin-top:7px')}${T('Qualidade', 41)}</div>
<div class="m s" style="grid-area:4/3/6/4;background:#66432d;padding-top:18px;color:#f0e4dc">${I('clockWarn', 26, 27, '')}${T('Reclamações', 57, 'margin-top:7px')}${T('de clientes', 45)}</div>
<div class="m s" style="grid-area:4/4/6/5;background:#3d003d;padding-top:17px;color:#ecdcec">${I('personChat', 28, 27)}${T('Solicitações', 50, 'margin-top:8px')}${T('de clientes', 45)}</div>
<div class="m s" style="grid-area:5/1;background:#41a4d2;padding-top:3px;color:#e8f6fc">${I('gear', 21, 21)}${T('Configurações', 61, 'margin-top:2px')}</div>
<div style="grid-area:6/1/7/5;background:#0d1a44;padding:7px 8px;font-weight:bold;font-size:11px">${T('Nenhum atendimento em andamento', 205)}</div></div>
<div class="ft r">${T('Menu sempre visível', 98)}<div class="cb" style="margin:0 10px 0 6px"></div>${T('Ocultar automaticamente', 117)}<div class="cb" style="margin:0 12px 0 7px"></div><div style="width:9px;height:9px;border-radius:50%;background:#6fe01e"></div></div>
</div></div>`);

/* ---------- bottom summary bar ---------- */
const line = (y, a, aw, b, bw, bold) => ({ y, a, aw, b, bw, bold });
const lines = (ls, start) => { let cur = start; return ls.map(l => { const m = l.y - 6.5 - cur; cur = l.y + 6.5; return `<div class="l ${l.bold ? 'b' : ''}" style="margin-top:${m}px">${T(l.a, l.aw)}${l.bw ? T(l.b, l.bw) : `<span style="margin-right:${l.b}px">${I('tri', 8, 4, 'color:#000')}</span>`}</div>`; }).join(''); };
const head = (t, w, ic, iw, ih, mt) => `<div class="hd"><div class="tt">${T(t, w)}</div>${I(ic, iw, ih, `margin-top:${mt}px`)}</div>`;
def('summary-bar', `<style>
:host{background:linear-gradient(#c9c9c9,#a8a8a8 50%,#858585);display:flex;gap:6px;padding:6px 4px 0 5px;color:#f4f8f0;border-bottom:1px solid #777}
.col{width:203px;height:143px;flex:none}.n{width:202px}.x{padding:0 8px 0 5px;box-shadow:1px 1px 0 #0003}.hd{display:flex;justify-content:space-between;height:33px;margin-right:-1px}
.tt{font-size:20px;line-height:23px;padding-top:6px;color:#fff}.l{display:flex;justify-content:space-between;height:13px;align-items:center}.b{font-weight:bold;color:#fff}
.m{align-items:center;width:68px}</style>
<div class="col c" style="gap:6px"><div class="x" style="background:#4169b4;height:74px">${head('Agendas', 80, 'calClock', 17, 16, 7)}${lines([line(42,'Minhas (próx. 7 dias):',117,'1',5,1),line(60,'Minhas (próx. 30 dias):',111,'1',5)],33)}</div>
<div class="x" style="background:#4169b4;height:63px;padding-top:.1px">${lines([line(12.500,'Agendas geral (próx. 7 dias):',142,'19',11.500),line(30,'Agendas não concluídas:',123,'0',6),line(47,'Conclusão não aceita:',107,'1',5)],0)}</div></div>
<div class="col c" style="gap:8px"><div class="x" style="background:#6f9433;height:57px">${head('Atendimentos', 125, 'compass', 17, 17, 7)}${lines([line(42,'Meus pendentes:',97,'1',5,1)],33)}</div>
<div class="x" style="background:#6f9433;height:78px;padding-top:.1px">${lines([line(10,'Tempo de espera:',100,'00:08:58',43,1),line(27.500,'Atendimentos em andamento:',142,'5',6),line(45,'Atendimentos aguardando:',130,'32',12),line(62,'Conclusão não aceita:',107,'0',6)],0)}</div></div>
<div class="col x" style="background:#217346">${head('Qualidade', 94, 'ribbon', 18, 24, 6)}${lines([line(42.500,'Visualizar: Mês Atual',99,31,0),line(75,'Registros não concluídos:',143,'3',6,1),line(92.500,'Não conformidade preventiva:',145,'0',6),line(110,'Não conformidade corretiva:',137,'0',6),line(127,'Registro de Melhorias:',107,'0',6)],33)}</div>
<div class="col x n" style="background:#66432d">${head('Reclamações', 128, 'clockWarn', 22, 23, 6)}${lines([line(42.500,'Visualizar: Mês Atual',99,30,0),line(75,'Registros não concluídos:',143,'4',6,1),line(92.500,'Procedentes:',64,'0',6),line(110,'Não procedentes:',86,'0',6),line(127,'Total / Fator:',59,'0 / 0,00 %',49)],33)}</div>
<div class="col x n" style="background:#41a4d2">${head('Scrum', 59, 'gear', 21, 21, 5)}${lines([line(41,'Versão: 1.27.4.E-2',89,31,0),line(58,'Qtde. Ocorrências:',92,'52',12),line(75,'Qtde. Homologados:',97,'52',12),line(92.500,'IRD:',19,'4 / 7,69%',46),line(110,'IOC:',20,'10 / 19,23%',58),line(127,'C1V:',23,'46 / 88,46%',58)],33)}</div>
<div class="c" style="gap:6px"><div class="m c" style="height:79px;background:#a5355c;padding-top:14px;color:#fbdfe9">${I('power', 24, 24)}${T('Fechar', 34, 'margin-top:11px')}</div>
<div class="m c" style="width:67px;height:58px;background:#8433ad;padding-top:15px;line-height:15px">${T('Gráfico de', 51)}${T('Atendimento', 60)}</div></div>`);

/* ---------- taskbar ---------- */
def('task-button', el => `<style>:host{width:158px;height:27px;border:1px solid #777;border-radius:2px;display:flex;align-items:center;padding-left:8px;color:#fff;font:12px/16px "Open Sans",sans-serif;
background:${el.hasAttribute('on') ? 'linear-gradient(170deg,#a5a5a5,#b8b8b8 45%,#6c6c6c 50%,#999)' : 'linear-gradient(172deg,#787878,#444 45%,#161616 50%,#1e1e1e)'}}</style>${I(el.dataset.i, 16, 16, 'margin-right:4px')}${T(el.dataset.t, el.dataset.w, 'margin-top:-2px')}`);
const tray = [['skred',14,14,0],['tpang',16,16,9],['tpang',16,16,8],['net',15,15,9],['vol',14,14,9],['flag',15,15,10],['yel',16,16,9],['bb',16,16,8],['radar',15,15,9]];
def('task-bar', `<style>:host{height:29px;background:linear-gradient(90deg,#222,#0c0c0c 10%,#0c0c0c 80%,#1c1c1c);border-top:1px solid #686868;display:flex;align-items:center}
.clk{color:#fff;font:12px/16px "Open Sans",sans-serif;margin:0 28px 0 33px}</style>
${I('orb', 38, 38, 'margin:-8px 0 0 8px')}${I('firefox', 15, 15, 'margin:0 0 2px 27px')}${I('explorer', 17, 16, 'margin:2px 16px 0 30px')}
<div class="r" style="gap:4px;align-self:flex-start"><task-button data-i="skype" data-t="Skype™ - amz-jeffers..." data-w="119"></task-button><task-button on data-i="pang" data-t="Pangéia CRM" data-w="71"></task-button><task-button data-i="paint" data-t="Encaminhamento de..." data-w="119"></task-button></div>
<div class="g"></div>${tray.map(t => I(t[0], t[1], t[2], `margin-left:${t[3]}px`)).join('')}<div class="clk">${T('10:20', 27)}</div><div style="width:14px;height:28px;border:1px solid #777;background:linear-gradient(135deg,#777,#222)"></div>`);

/* ---------- desktop ---------- */
def('crm-desktop', `<style>:host{position:relative;width:1920px;height:1080px;background:#000;overflow:hidden}
.mon{position:absolute;left:123px;top:50px;width:1229px;height:737px;border:1px solid #484848;border-radius:5px;background:#080808;padding:3px}
.mon>div{height:100%;border:1px solid #808080;border-radius:2px}
.glass{position:absolute;border:1px solid #666;border-radius:7px;background:#fbfbfb;padding:5px 4px 4px;box-shadow:0 1px 6px #0009,inset 0 0 2px #999}
</style>
<div class="mon"><div><pg-window data-title="Monitor de Atendimentos" data-w="256" data-s="240" style="height:727px;width:1219px;--er:7px"><monitor-view></monitor-view></pg-window></div></div>
<div class="glass" style="left:394px;top:125px;width:759px;height:619px"><pg-window data-title="Lançamento de Atendimento" data-w="286" data-s="240" style="height:608px;width:749px;--tr:1px"><launch-view></launch-view></pg-window></div>
<div class="glass" style="left:417px;top:377px;width:712px;height:114px;padding:4px"><wait-popup></wait-popup></div>
<crm-widget style="position:absolute;left:1481px;top:246px;width:299px;height:500px"></crm-widget>
<summary-bar style="position:absolute;left:266px;top:851px;width:1120px;height:156px"></summary-bar>
<div style="position:absolute;left:1907px;top:1039px;width:20px;height:20px;border:3px solid #888;border-radius:4px;background:#4583cd"></div>
<task-bar style="position:absolute;left:0;top:1051px;width:1920px"></task-bar>`);

/* Adjusts letter spacing so that a label takes a set width. Registered last, when the tree is complete. */
customElements.define('fit-text', class extends HTMLElement {
  constructor() { super(); this.attachShadow({ mode: 'open' }).innerHTML = '<style>:host{display:inline-block;white-space:nowrap}span{display:inline-block}</style><span><slot></slot></span>'; }
  connectedCallback() {
    const s = this.shadowRoot.querySelector('span'), w = +this.getAttribute('w'), n = this.textContent.length;
    const nat = s.getBoundingClientRect().width;
    if (nat && n) { s.style.letterSpacing = (w - nat) / n + 'px'; this.style.width = w + 'px'; }
  }
});
</script>
</body>
</html>
